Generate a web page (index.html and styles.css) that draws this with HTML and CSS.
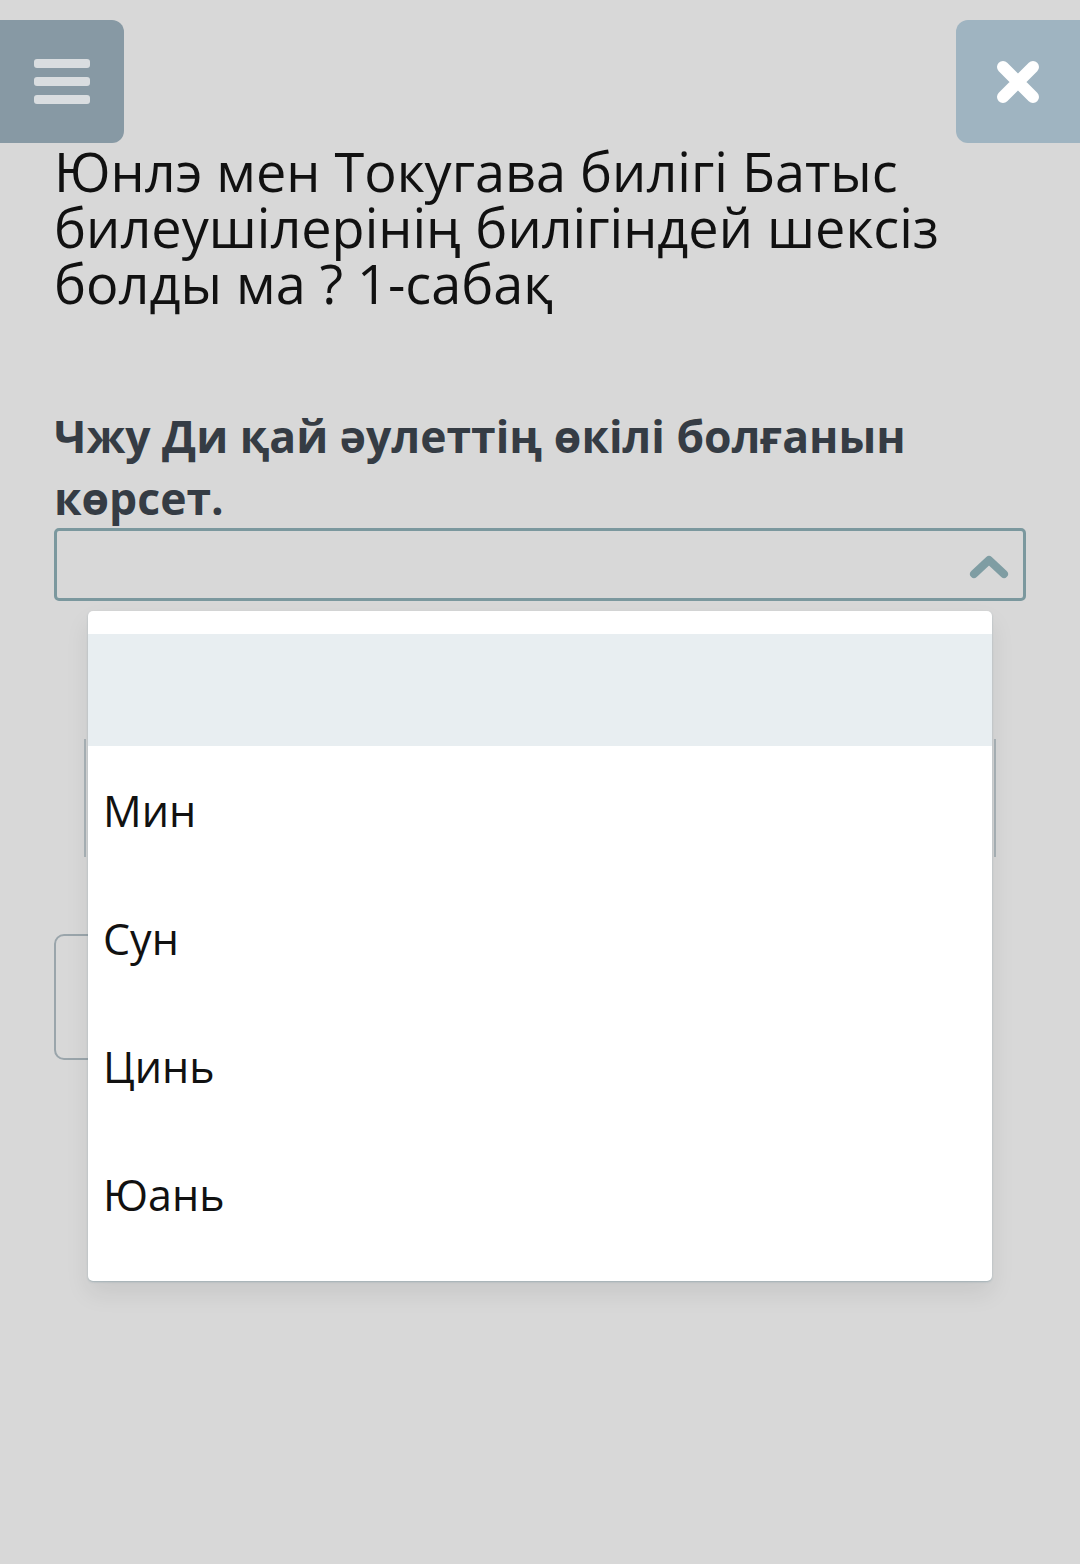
FILE: index.html
```html
<!DOCTYPE html>
<html>
  <head>
    <meta http-equiv="Content-Type" content="text/html;charset=utf-8" />
    <title>Тест</title>
    <link rel="stylesheet" href="styles.css">
  </head>
  <body>
    <div class="topbar">
      <button class="btn menu-btn" aria-label="Мәзір">
        <svg width="56" height="46" viewBox="0 0 56 46">
          <rect x="0" y="0" width="56" height="9" rx="3" fill="#d9dde0" />
          <rect x="0" y="18" width="56" height="9" rx="3" fill="#d9dde0" />
          <rect x="0" y="36" width="56" height="9" rx="3" fill="#d9dde0" />
        </svg>
      </button>
      <button class="btn close-btn" aria-label="Жабу">
        <svg width="46" height="46" viewBox="0 0 46 46">
          <path d="M8 8 L38 38 M38 8 L8 38" stroke="#fff" stroke-width="12" stroke-linecap="round" />
        </svg>
      </button>
    </div>

    <div class="main">
      <h1 class="title">Юнлэ мен Токугава билігі Батыс билеушілерінің билігіндей шексіз болды ма ? 1-сабақ</h1>

      <div class="question">
        <p class="question-text">Чжу Ди қай әулеттің өкілі болғанын көрсет.</p>

        <div class="select-wrap">
          <div class="select">
            <svg class="chevron" width="40" height="26" viewBox="0 0 40 26">
              <path d="M5 21 L20 7 L35 21" fill="none" stroke="#7f9da3" stroke-width="8" stroke-linecap="round" stroke-linejoin="round" />
            </svg>
          </div>

          <ul class="dropdown">
            <li class="option active"></li>
            <li class="option">Мин</li>
            <li class="option">Сун</li>
            <li class="option">Цинь</li>
            <li class="option">Юань</li>
          </ul>
        </div>

        <div class="answer-box"></div>
        <div class="submit-box"></div>
      </div>
    </div>
  </body>
</html>
```

FILE: styles.css
```css
html, body {
  margin: 0;
  padding: 0;
}

body {
  background-color: #d8d8d8;
  font-family: "Open Sans", "Noto Sans", sans-serif;
  color: #111;
  min-height: 1564px;
}

.topbar {
  display: flex;
  justify-content: space-between;
  padding-top: 20px;
}

.btn {
  border: none;
  padding: 0;
  width: 124px;
  height: 123px;
  display: flex;
  align-items: center;
  justify-content: center;
}

.menu-btn {
  background-color: #8799a4;
  border-radius: 0 12px 12px 0;
}

.close-btn {
  background-color: #9fb4c1;
  border-radius: 12px 0 0 12px;
}

.main {
  padding: 0 54px;
}

.title {
  font-size: 54px;
  font-weight: 400;
  line-height: 56px;
  margin: 0;
  color: #111;
}

.question {
  margin-top: 94px;
}

.question-text {
  font-size: 44.5px;
  font-weight: 700;
  line-height: 62px;
  color: #353c44;
  margin: 0 0 -1px 0;
}

.select-wrap {
  position: relative;
}

.select {
  height: 67px;
  border: 3px solid #7b989e;
  border-radius: 5px;
  display: flex;
  align-items: center;
  justify-content: flex-end;
  padding-right: 14px;
}

.chevron {
  margin-top: 2px;
}

.dropdown {
  position: absolute;
  z-index: 2;
  top: 83px;
  left: 34px;
  right: 34px;
  margin: 0;
  padding: 23px 0;
  list-style: none;
  background-color: #fff;
  border-radius: 5px;
  box-shadow: 0 1px 2px rgba(120, 150, 160, 0.5), 0 12px 24px rgba(0, 0, 0, 0.08);
}

.option {
  height: 128px;
  display: flex;
  align-items: center;
  padding-left: 15px;
  font-size: 43px;
  color: #111;
}

.option.active {
  height: 112px;
  background-color: #e8eef1;
}

.answer-box {
  margin: 138px 30px 0 30px;
  height: 118px;
  border-left: 2px solid #a9b2b7;
  border-right: 2px solid #a9b2b7;
}

.submit-box {
  margin-top: 77px;
  width: 360px;
  height: 122px;
  border: 2px solid #9aa5ab;
  border-radius: 10px;
}
```
